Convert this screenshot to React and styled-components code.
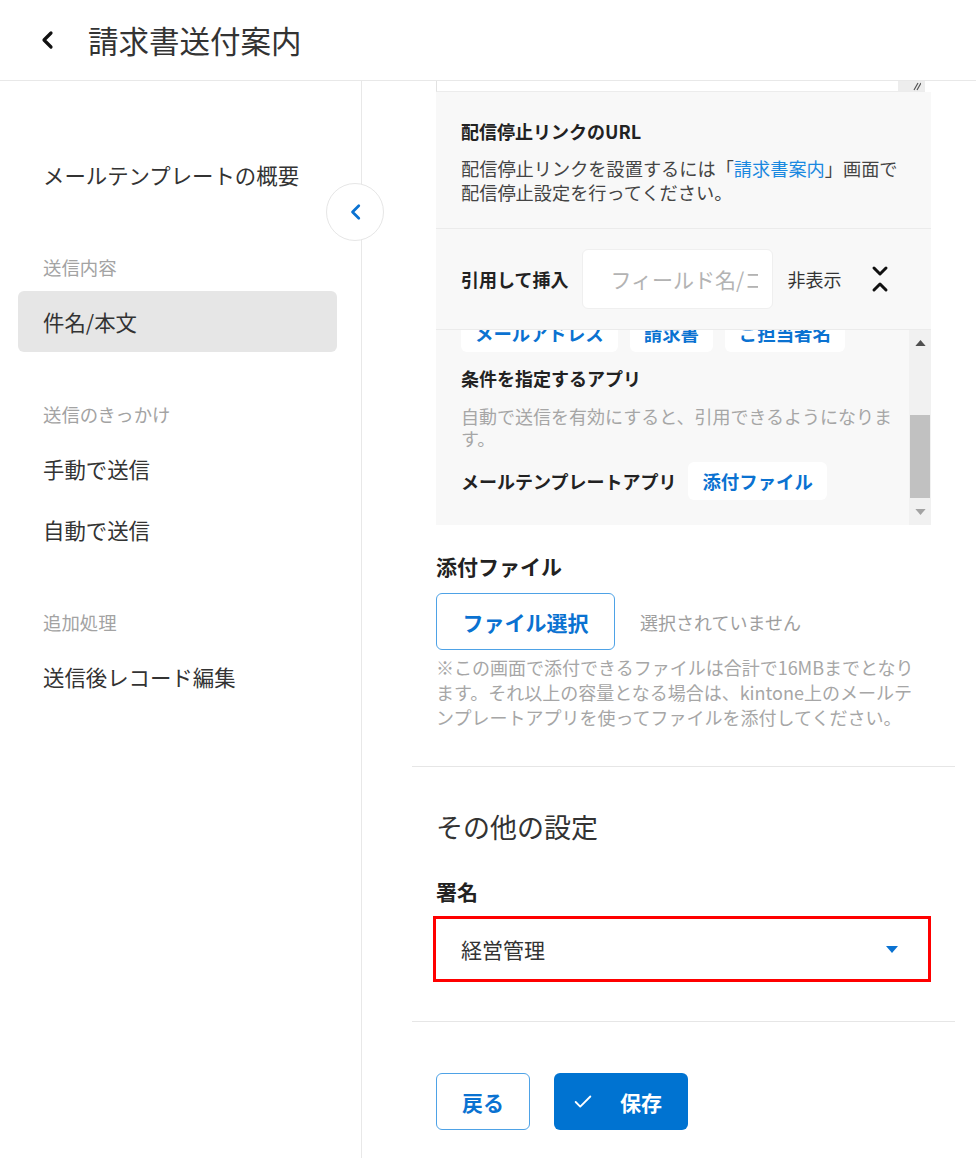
import { useLayoutEffect, useRef } from "react";
import styled, { createGlobalStyle } from "styled-components";
import { Check } from "lucide-react";

const blue = "#0a72d1";

const GlobalStyle = createGlobalStyle`
  html, body {
    margin: 0;
    padding: 0;
    background: #fff;
  }
  body {
    font-family: "Noto Sans CJK JP", "Noto Sans", sans-serif;
    color: #333;
  }
  * { box-sizing: border-box; }
`;

const Page = styled.div`
  width: 976px;
  height: 1158px;
  display: flex;
  flex-direction: column;
  overflow: hidden;
`;

const Header = styled.header`
  flex: none;
  height: 81px;
  border-bottom: 1px solid #e8e8e8;
  display: flex;
  align-items: center;
  padding-left: 39px;
  gap: 33px;
`;

const BackButton = styled.button`
  border: 0;
  background: none;
  padding: 0;
  display: flex;
  cursor: pointer;
`;

const Title = styled.h1`
  margin: 0;
  font-size: 30.5px;
  font-weight: 400;
  line-height: 40px;
  color: #333;
  padding-bottom: 1px;
`;

const Body = styled.div`
  flex: 1;
  display: flex;
  min-height: 0;
`;

const Sidebar = styled.nav`
  position: relative;
  flex: none;
  width: 362px;
  border-right: 1px solid #e8e8e8;
  padding-top: 63px;
`;

const NavItem = styled.div`
  height: 61px;
  margin: 0 24px 0 18px;
  padding-left: 25px;
  display: flex;
  align-items: center;
  font-size: 21.4px;
  border-radius: 6px;
  background: ${(p) => (p.$active ? "#e6e6e6" : "transparent")};
`;

const NavGroup = styled.div`
  margin-top: 48px;
`;

const NavLabel = styled.div`
  padding-left: 43px;
  height: 28px;
  line-height: 28px;
  font-size: 18.4px;
  color: #a3a3a3;
  margin-bottom: 10px;
`;

const CollapseButton = styled.button`
  position: absolute;
  top: 102px;
  right: -23px;
  width: 58px;
  height: 58px;
  border-radius: 50%;
  border: 1px solid #e6e6e6;
  background: #fff;
  display: flex;
  align-items: center;
  justify-content: center;
  padding: 0;
`;

const Main = styled.main`
  flex: 1;
  padding: 0 21px 0 50px;
  display: flex;
  flex-direction: column;
  min-width: 0;
`;

const Block = styled.div`
  margin: 0 24px;
`;

const TextareaStub = styled.div`
  height: 11px;
  margin: 0 30px 0 24px;
  background: #fff;
  border-left: 1px solid #e2e2e2;
  border-bottom: 1px solid #ececec;
  display: flex;
  justify-content: flex-end;
`;

const Grip = styled.div`
  width: 27px;
  height: 100%;
  background: #ededed;
  display: flex;
  justify-content: flex-end;
  padding-right: 4px;
`;

const Panel = styled.div`
  margin: 0 24px;
  background: #f8f8f8;
  display: flex;
  flex-direction: column;
`;

const UrlSection = styled.div`
  padding: 25px 16px 24px 25px;
  border-bottom: 1px solid #ebebeb;
`;

const BoldLine = styled.div`
  font-size: 18px;
  font-weight: 700;
  line-height: 28px;
  color: #222;
`;

const Desc = styled.p`
  margin: 11px 0 0;
  font-size: 18.2px;
  line-height: 24px;
  color: #444;
`;

const Link = styled.a`
  color: #1a88e0;
  text-decoration: none;
`;

const QuoteRow = styled.div`
  height: 101px;
  padding: 0 25px;
  display: flex;
  align-items: center;
  border-bottom: 1px solid #ebebeb;
`;

const FieldInput = styled.input`
  width: 191px;
  height: 60px;
  margin-left: 14px;
  border: 1px solid #efefef;
  border-radius: 6px;
  background: #fff;
  padding: 0 14px 0 27px;
  font-family: inherit;
  font-size: 21px;
  color: #333;
  outline: none;
  &::placeholder {
    color: #b3b3b3;
  }
`;

const HideLabel = styled.span`
  margin-left: 14px;
  font-size: 18px;
  color: #333;
`;

const IconButton = styled.button`
  margin-left: 30px;
  border: 0;
  background: none;
  padding: 0;
  display: flex;
`;

const ListArea = styled.div`
  height: 195px;
  display: flex;
`;

const ListScroll = styled.div`
  position: relative;
  flex: 1;
  overflow: hidden;
  padding: 0 0 25px 25px;
`;

const ChipRow = styled.div`
  display: flex;
  gap: 12px;
  margin-top: ${(p) => p.$gap || 0}px;
`;

const Chip = styled.span`
  height: 38px;
  padding: 0 14px;
  display: inline-flex;
  align-items: center;
  background: #fff;
  border-radius: 6px;
  font-size: 18.4px;
  font-weight: 700;
  color: ${blue};
`;

const ListHeading = styled(BoldLine)`
  margin-top: ${(p) => p.$gap || 0}px;
`;

const GrayNote = styled.p`
  margin: 13px 0 0;
  font-size: 18px;
  line-height: 22px;
  color: #a6a6a6;
`;

const AppRow = styled.div`
  margin-top: 13px;
  display: flex;
  align-items: center;
  gap: 12px;
`;

const Scrollbar = styled.div`
  flex: none;
  width: 22px;
  background: #f1f1f1;
  display: flex;
  flex-direction: column;
`;

const ScrollArrow = styled.div`
  height: 26px;
  display: flex;
  align-items: center;
  justify-content: center;
`;

const Thumb = styled.div`
  height: 83px;
  margin: ${(p) => p.$offset}px 1px 0;
  background: #c1c1c1;
`;

const Spacer = styled.div`
  flex: 1;
`;

const SectionTitle = styled.div`
  font-size: 21px;
  font-weight: 700;
  line-height: 30px;
  color: #222;
  margin-top: ${(p) => p.$gap}px;
`;

const FileRow = styled.div`
  margin-top: 12px;
  display: flex;
  align-items: center;
`;

const OutlineButton = styled.button`
  height: 57px;
  width: ${(p) => p.$width}px;
  border: 1.5px solid #4ea2e6;
  border-radius: 6px;
  background: #fff;
  font-family: inherit;
  font-size: 21px;
  font-weight: 700;
  color: ${blue};
  padding: 0;
`;

const NoFile = styled.span`
  margin-left: 25px;
  font-size: 18px;
  color: #9e9e9e;
`;

const Note = styled.p`
  margin: 5px 0 0;
  font-size: 18px;
  line-height: 25px;
  color: #a6a6a6;
`;

const Divider = styled.hr`
  margin: ${(p) => p.$gap}px 0 0;
  border: 0;
  border-top: 1px solid #e6e6e6;
`;

const Heading = styled.h2`
  margin: 42px 0 0;
  font-size: 27px;
  font-weight: 400;
  line-height: 36px;
  color: #333;
`;

const Highlight = styled.div`
  margin: 10px 24px 0 21px;
  border: 3px solid #ff0000;
`;

const Select = styled.div`
  height: 60px;
  padding: 0 30px 0 25px;
  display: flex;
  align-items: center;
  justify-content: space-between;
  background: #fff;
  font-size: 21px;
  color: #333;
`;

const Actions = styled.div`
  margin: 51px 24px 0;
  display: flex;
  gap: 24px;
`;

const PrimaryButton = styled.button`
  height: 57px;
  width: 134px;
  border: 0;
  border-radius: 6px;
  background: #0073d1;
  color: #fff;
  font-family: inherit;
  font-size: 21px;
  font-weight: 700;
  display: flex;
  align-items: center;
  padding: 0 0 0 18px;
  gap: 26px;
`;

const Triangle = ({ up, color = "#555", w = 12, h = 7 }) => (
  <svg width={w} height={h} viewBox="0 0 12 7">
    <polygon points={up ? "0,7 6,0 12,7" : "0,0 12,0 6,7"} fill={color} />
  </svg>
);

const Chevron = ({ color, size = 20, stroke = 3 }) => (
  <svg width={size * 0.8} height={size} viewBox="0 0 16 20" fill="none">
    <polyline
      points="12,3 5,10 12,17"
      stroke={color}
      strokeWidth={stroke}
      strokeLinecap="round"
      strokeLinejoin="round"
    />
  </svg>
);

const CollapseIcon = () => (
  <svg width="18" height="28" viewBox="0 0 18 28" fill="none">
    <g stroke="#111" strokeWidth="3" strokeLinecap="round" strokeLinejoin="round">
      <polyline points="3,3 9,9 15,3" />
      <polyline points="3,25 9,19 15,25" />
    </g>
  </svg>
);

export default function App() {
  const scrollRef = useRef(null);
  const rowRef = useRef(null);

  useLayoutEffect(() => {
    const box = scrollRef.current;
    const row = rowRef.current;
    if (box && row) box.scrollTop = row.offsetTop + row.offsetHeight - 22;
  }, []);

  return (
    <Page>
      <GlobalStyle />
      <Header>
        <BackButton aria-label="戻る">
          <Chevron color="#111" size={20} stroke={3.2} />
        </BackButton>
        <Title>請求書送付案内</Title>
      </Header>
      <Body>
        <Sidebar>
          <NavItem>メールテンプレートの概要</NavItem>
          <NavGroup>
            <NavLabel>送信内容</NavLabel>
            <NavItem $active>件名/本文</NavItem>
          </NavGroup>
          <NavGroup>
            <NavLabel>送信のきっかけ</NavLabel>
            <NavItem>手動で送信</NavItem>
            <NavItem>自動で送信</NavItem>
          </NavGroup>
          <NavGroup>
            <NavLabel>追加処理</NavLabel>
            <NavItem>送信後レコード編集</NavItem>
          </NavGroup>
          <CollapseButton aria-label="閉じる">
            <Chevron color="#0a72d1" size={18} stroke={3} />
          </CollapseButton>
        </Sidebar>

        <Main>
          <TextareaStub>
            <Grip>
              <svg width="10" height="10" viewBox="0 0 10 10">
                <path d="M3 9 L7 2 M6 9 L10 2" stroke="#555" strokeWidth="1.2" />
              </svg>
            </Grip>
          </TextareaStub>
          <Panel>
            <UrlSection>
              <BoldLine>配信停止リンクのURL</BoldLine>
              <Desc>
                配信停止リンクを設置するには「<Link href="#">請求書案内</Link>」画面で
                <br />
                配信停止設定を行ってください。
              </Desc>
            </UrlSection>
            <QuoteRow>
              <BoldLine>引用して挿入</BoldLine>
              <FieldInput placeholder="フィールド名/コード" />
              <HideLabel>非表示</HideLabel>
              <IconButton aria-label="非表示">
                <CollapseIcon />
              </IconButton>
            </QuoteRow>
            <ListArea>
              <ListScroll ref={scrollRef}>
                <ListHeading $gap={20}>請求書アプリ</ListHeading>
                <ChipRow $gap={10}>
                  <Chip>会社名</Chip>
                  <Chip>部署名</Chip>
                  <Chip>請求日</Chip>
                </ChipRow>
                <ChipRow $gap={12} ref={rowRef}>
                  <Chip>メールアドレス</Chip>
                  <Chip>請求書</Chip>
                  <Chip>ご担当者名</Chip>
                </ChipRow>
                <ListHeading $gap={12}>条件を指定するアプリ</ListHeading>
                <GrayNote>
                  自動で送信を有効にすると、引用できるようになりま
                  <br />
                  す。
                </GrayNote>
                <AppRow>
                  <BoldLine>メールテンプレートアプリ</BoldLine>
                  <Chip>添付ファイル</Chip>
                </AppRow>
              </ListScroll>
              <Scrollbar>
                <ScrollArrow>
                  <Triangle up w={11} h={6} color="#505050" />
                </ScrollArrow>
                <Thumb $offset={59} />
                <Spacer />
                <ScrollArrow>
                  <Triangle w={11} h={6} color="#a3a3a3" />
                </ScrollArrow>
              </Scrollbar>
            </ListArea>
          </Panel>

          <Block>
            <SectionTitle $gap={26}>添付ファイル</SectionTitle>
            <FileRow>
              <OutlineButton $width={179}>ファイル選択</OutlineButton>
              <NoFile>選択されていません</NoFile>
            </FileRow>
            <Note>
              ※この画面で添付できるファイルは合計で16MBまでとなり
              <br />
              ます。それ以上の容量となる場合は、kintone上のメールテ
              <br />
              ンプレートアプリを使ってファイルを添付してください。
            </Note>
          </Block>

          <Divider $gap={36} />

          <Block>
            <Heading>その他の設定</Heading>
            <SectionTitle $gap={31}>署名</SectionTitle>
          </Block>
          <Highlight>
            <Select>
              <span>経営管理</span>
              <Triangle color="#0a72d1" w={12} h={7} />
            </Select>
          </Highlight>

          <Divider $gap={39} />

          <Actions>
            <OutlineButton $width={94}>戻る</OutlineButton>
            <PrimaryButton>
              <Check size={22} strokeWidth={2} color="#fff" />
              保存
            </PrimaryButton>
          </Actions>
        </Main>
      </Body>
    </Page>
  );
}
